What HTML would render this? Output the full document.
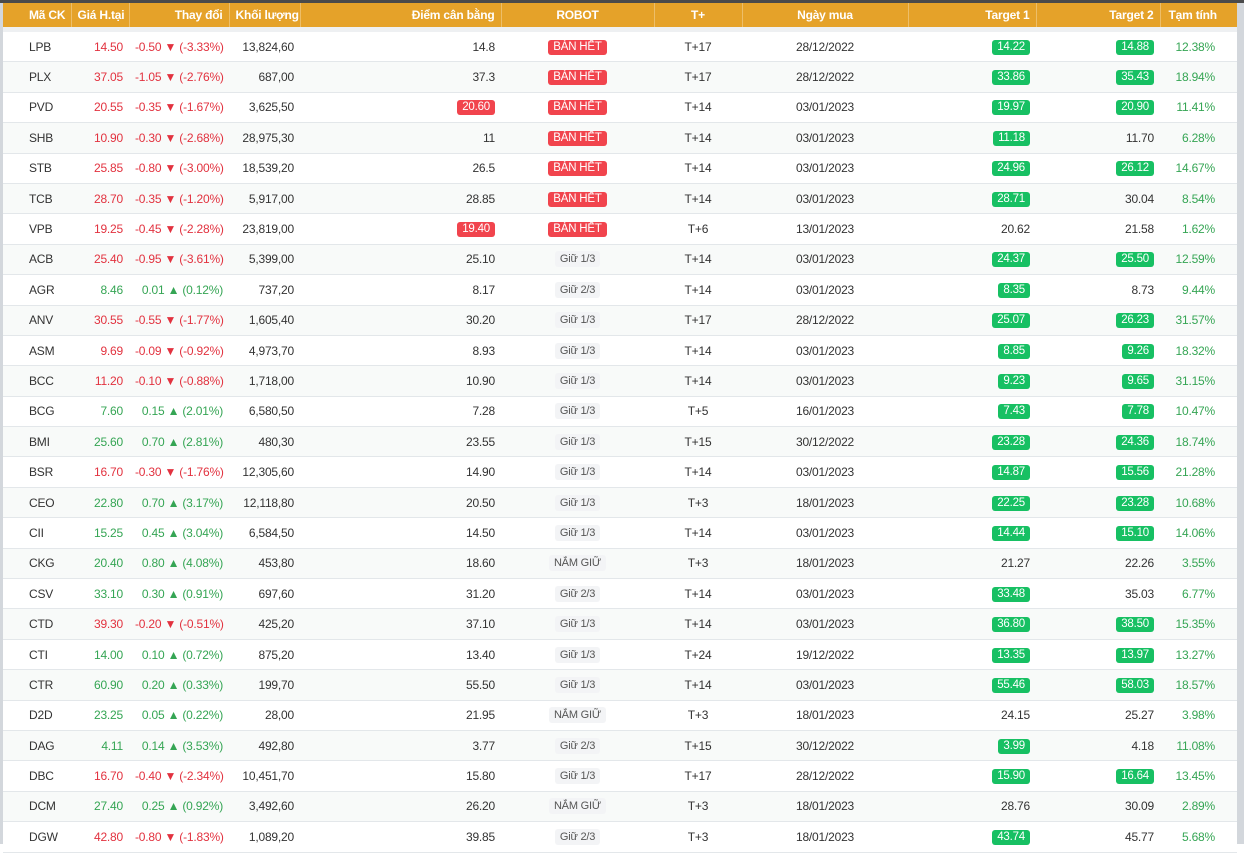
<!DOCTYPE html>
<html><head><meta charset="utf-8"><style>
html,body{margin:0;padding:0;width:1244px;height:844px;overflow:hidden;background:#fff;font-family:"Liberation Sans",sans-serif;}
.topbar{position:absolute;left:0;top:0;width:1244px;height:3px;background:#4a4a4a}
.lbar{position:absolute;left:0;top:3px;width:3px;height:841px;background:#d3d7dc}
.rbar{position:absolute;left:1237px;top:3px;width:7px;height:841px;background:#d3d7dc}
.hd{position:absolute;left:3px;top:3px;width:1234px;height:24px;background:#e5a229}
.hgap{position:absolute;left:3px;top:27px;width:1234px;height:5px;background:#eef0f2}
table{position:absolute;left:3px;border-collapse:collapse;table-layout:fixed;width:1234px}
#h{top:3px}
#h td{height:24px;color:#fff;font-weight:bold;font-size:12px;border-right:1px solid rgba(255,255,255,.3);padding:0 6px;white-space:nowrap;letter-spacing:-0.2px}
#b{top:32px}
#b td{height:29.4px;font-size:12px;color:#333;padding:0 6px;white-space:nowrap;border-bottom:1px solid #e3e7ea;letter-spacing:-0.2px}
#b tr:nth-child(even) td{background:#f8faf9}
#b td.c1{padding-left:26px;text-align:left}
.r{text-align:right}.c{text-align:center}
#b td.dn{color:#e2323f}#b td.up{color:#35a554}
.bd{display:inline-block;height:15px;line-height:15px;padding:0 5px;border-radius:3px;color:#fff;font-size:11.5px}
.rd{background:#f1444d}.gr{background:#17c063}
.gy{display:inline-block;height:16px;line-height:16px;padding:0 5px;border-radius:3px;background:#f3f4f6;color:#555;font-size:11px}
</style></head><body>
<div class="topbar"></div><div class="lbar"></div><div class="rbar"></div>
<div class="hd"></div><div class="hgap"></div>
<table id="h"><colgroup><col style="width:68px"><col style="width:58px"><col style="width:100px"><col style="width:71px"><col style="width:201px"><col style="width:153px"><col style="width:88px"><col style="width:166px"><col style="width:128px"><col style="width:124px"><col style="width:77px"></colgroup>
<tr><td style="padding-left:26px">Mã CK</td><td class="r">Giá H.tại</td><td class="r">Thay đổi</td><td class="r">Khối lượng</td><td class="r">Điểm cân bằng</td><td class="c">ROBOT</td><td class="c">T+</td><td class="c">Ngày mua</td><td class="r">Target 1</td><td class="r">Target 2</td><td style="padding-left:8px;border-right:none">Tạm tính</td></tr></table>
<table id="b"><colgroup><col style="width:68px"><col style="width:58px"><col style="width:100px"><col style="width:71px"><col style="width:201px"><col style="width:153px"><col style="width:88px"><col style="width:166px"><col style="width:128px"><col style="width:124px"><col style="width:77px"></colgroup>
<tr><td class="c1">LPB</td><td class="r dn">14.50</td><td class="r dn">-0.50 ▼ (-3.33%)</td><td class="r">13,824,60</td><td class="r">14.8</td><td class="c"><span class="bd rd">BÁN HẾT</span></td><td class="c">T+17</td><td class="c">28/12/2022</td><td class="r"><span class="bd gr">14.22</span></td><td class="r"><span class="bd gr">14.88</span></td><td class="r up" style="padding-right:22px">12.38%</td></tr>
<tr><td class="c1">PLX</td><td class="r dn">37.05</td><td class="r dn">-1.05 ▼ (-2.76%)</td><td class="r">687,00</td><td class="r">37.3</td><td class="c"><span class="bd rd">BÁN HẾT</span></td><td class="c">T+17</td><td class="c">28/12/2022</td><td class="r"><span class="bd gr">33.86</span></td><td class="r"><span class="bd gr">35.43</span></td><td class="r up" style="padding-right:22px">18.94%</td></tr>
<tr><td class="c1">PVD</td><td class="r dn">20.55</td><td class="r dn">-0.35 ▼ (-1.67%)</td><td class="r">3,625,50</td><td class="r"><span class="bd rd">20.60</span></td><td class="c"><span class="bd rd">BÁN HẾT</span></td><td class="c">T+14</td><td class="c">03/01/2023</td><td class="r"><span class="bd gr">19.97</span></td><td class="r"><span class="bd gr">20.90</span></td><td class="r up" style="padding-right:22px">11.41%</td></tr>
<tr><td class="c1">SHB</td><td class="r dn">10.90</td><td class="r dn">-0.30 ▼ (-2.68%)</td><td class="r">28,975,30</td><td class="r">11</td><td class="c"><span class="bd rd">BÁN HẾT</span></td><td class="c">T+14</td><td class="c">03/01/2023</td><td class="r"><span class="bd gr">11.18</span></td><td class="r">11.70</td><td class="r up" style="padding-right:22px">6.28%</td></tr>
<tr><td class="c1">STB</td><td class="r dn">25.85</td><td class="r dn">-0.80 ▼ (-3.00%)</td><td class="r">18,539,20</td><td class="r">26.5</td><td class="c"><span class="bd rd">BÁN HẾT</span></td><td class="c">T+14</td><td class="c">03/01/2023</td><td class="r"><span class="bd gr">24.96</span></td><td class="r"><span class="bd gr">26.12</span></td><td class="r up" style="padding-right:22px">14.67%</td></tr>
<tr><td class="c1">TCB</td><td class="r dn">28.70</td><td class="r dn">-0.35 ▼ (-1.20%)</td><td class="r">5,917,00</td><td class="r">28.85</td><td class="c"><span class="bd rd">BÁN HẾT</span></td><td class="c">T+14</td><td class="c">03/01/2023</td><td class="r"><span class="bd gr">28.71</span></td><td class="r">30.04</td><td class="r up" style="padding-right:22px">8.54%</td></tr>
<tr><td class="c1">VPB</td><td class="r dn">19.25</td><td class="r dn">-0.45 ▼ (-2.28%)</td><td class="r">23,819,00</td><td class="r"><span class="bd rd">19.40</span></td><td class="c"><span class="bd rd">BÁN HẾT</span></td><td class="c">T+6</td><td class="c">13/01/2023</td><td class="r">20.62</td><td class="r">21.58</td><td class="r up" style="padding-right:22px">1.62%</td></tr>
<tr><td class="c1">ACB</td><td class="r dn">25.40</td><td class="r dn">-0.95 ▼ (-3.61%)</td><td class="r">5,399,00</td><td class="r">25.10</td><td class="c"><span class="gy">Giữ 1/3</span></td><td class="c">T+14</td><td class="c">03/01/2023</td><td class="r"><span class="bd gr">24.37</span></td><td class="r"><span class="bd gr">25.50</span></td><td class="r up" style="padding-right:22px">12.59%</td></tr>
<tr><td class="c1">AGR</td><td class="r up">8.46</td><td class="r up">0.01 ▲ (0.12%)</td><td class="r">737,20</td><td class="r">8.17</td><td class="c"><span class="gy">Giữ 2/3</span></td><td class="c">T+14</td><td class="c">03/01/2023</td><td class="r"><span class="bd gr">8.35</span></td><td class="r">8.73</td><td class="r up" style="padding-right:22px">9.44%</td></tr>
<tr><td class="c1">ANV</td><td class="r dn">30.55</td><td class="r dn">-0.55 ▼ (-1.77%)</td><td class="r">1,605,40</td><td class="r">30.20</td><td class="c"><span class="gy">Giữ 1/3</span></td><td class="c">T+17</td><td class="c">28/12/2022</td><td class="r"><span class="bd gr">25.07</span></td><td class="r"><span class="bd gr">26.23</span></td><td class="r up" style="padding-right:22px">31.57%</td></tr>
<tr><td class="c1">ASM</td><td class="r dn">9.69</td><td class="r dn">-0.09 ▼ (-0.92%)</td><td class="r">4,973,70</td><td class="r">8.93</td><td class="c"><span class="gy">Giữ 1/3</span></td><td class="c">T+14</td><td class="c">03/01/2023</td><td class="r"><span class="bd gr">8.85</span></td><td class="r"><span class="bd gr">9.26</span></td><td class="r up" style="padding-right:22px">18.32%</td></tr>
<tr><td class="c1">BCC</td><td class="r dn">11.20</td><td class="r dn">-0.10 ▼ (-0.88%)</td><td class="r">1,718,00</td><td class="r">10.90</td><td class="c"><span class="gy">Giữ 1/3</span></td><td class="c">T+14</td><td class="c">03/01/2023</td><td class="r"><span class="bd gr">9.23</span></td><td class="r"><span class="bd gr">9.65</span></td><td class="r up" style="padding-right:22px">31.15%</td></tr>
<tr><td class="c1">BCG</td><td class="r up">7.60</td><td class="r up">0.15 ▲ (2.01%)</td><td class="r">6,580,50</td><td class="r">7.28</td><td class="c"><span class="gy">Giữ 1/3</span></td><td class="c">T+5</td><td class="c">16/01/2023</td><td class="r"><span class="bd gr">7.43</span></td><td class="r"><span class="bd gr">7.78</span></td><td class="r up" style="padding-right:22px">10.47%</td></tr>
<tr><td class="c1">BMI</td><td class="r up">25.60</td><td class="r up">0.70 ▲ (2.81%)</td><td class="r">480,30</td><td class="r">23.55</td><td class="c"><span class="gy">Giữ 1/3</span></td><td class="c">T+15</td><td class="c">30/12/2022</td><td class="r"><span class="bd gr">23.28</span></td><td class="r"><span class="bd gr">24.36</span></td><td class="r up" style="padding-right:22px">18.74%</td></tr>
<tr><td class="c1">BSR</td><td class="r dn">16.70</td><td class="r dn">-0.30 ▼ (-1.76%)</td><td class="r">12,305,60</td><td class="r">14.90</td><td class="c"><span class="gy">Giữ 1/3</span></td><td class="c">T+14</td><td class="c">03/01/2023</td><td class="r"><span class="bd gr">14.87</span></td><td class="r"><span class="bd gr">15.56</span></td><td class="r up" style="padding-right:22px">21.28%</td></tr>
<tr><td class="c1">CEO</td><td class="r up">22.80</td><td class="r up">0.70 ▲ (3.17%)</td><td class="r">12,118,80</td><td class="r">20.50</td><td class="c"><span class="gy">Giữ 1/3</span></td><td class="c">T+3</td><td class="c">18/01/2023</td><td class="r"><span class="bd gr">22.25</span></td><td class="r"><span class="bd gr">23.28</span></td><td class="r up" style="padding-right:22px">10.68%</td></tr>
<tr><td class="c1">CII</td><td class="r up">15.25</td><td class="r up">0.45 ▲ (3.04%)</td><td class="r">6,584,50</td><td class="r">14.50</td><td class="c"><span class="gy">Giữ 1/3</span></td><td class="c">T+14</td><td class="c">03/01/2023</td><td class="r"><span class="bd gr">14.44</span></td><td class="r"><span class="bd gr">15.10</span></td><td class="r up" style="padding-right:22px">14.06%</td></tr>
<tr><td class="c1">CKG</td><td class="r up">20.40</td><td class="r up">0.80 ▲ (4.08%)</td><td class="r">453,80</td><td class="r">18.60</td><td class="c"><span class="gy">NẮM GIỮ</span></td><td class="c">T+3</td><td class="c">18/01/2023</td><td class="r">21.27</td><td class="r">22.26</td><td class="r up" style="padding-right:22px">3.55%</td></tr>
<tr><td class="c1">CSV</td><td class="r up">33.10</td><td class="r up">0.30 ▲ (0.91%)</td><td class="r">697,60</td><td class="r">31.20</td><td class="c"><span class="gy">Giữ 2/3</span></td><td class="c">T+14</td><td class="c">03/01/2023</td><td class="r"><span class="bd gr">33.48</span></td><td class="r">35.03</td><td class="r up" style="padding-right:22px">6.77%</td></tr>
<tr><td class="c1">CTD</td><td class="r dn">39.30</td><td class="r dn">-0.20 ▼ (-0.51%)</td><td class="r">425,20</td><td class="r">37.10</td><td class="c"><span class="gy">Giữ 1/3</span></td><td class="c">T+14</td><td class="c">03/01/2023</td><td class="r"><span class="bd gr">36.80</span></td><td class="r"><span class="bd gr">38.50</span></td><td class="r up" style="padding-right:22px">15.35%</td></tr>
<tr><td class="c1">CTI</td><td class="r up">14.00</td><td class="r up">0.10 ▲ (0.72%)</td><td class="r">875,20</td><td class="r">13.40</td><td class="c"><span class="gy">Giữ 1/3</span></td><td class="c">T+24</td><td class="c">19/12/2022</td><td class="r"><span class="bd gr">13.35</span></td><td class="r"><span class="bd gr">13.97</span></td><td class="r up" style="padding-right:22px">13.27%</td></tr>
<tr><td class="c1">CTR</td><td class="r up">60.90</td><td class="r up">0.20 ▲ (0.33%)</td><td class="r">199,70</td><td class="r">55.50</td><td class="c"><span class="gy">Giữ 1/3</span></td><td class="c">T+14</td><td class="c">03/01/2023</td><td class="r"><span class="bd gr">55.46</span></td><td class="r"><span class="bd gr">58.03</span></td><td class="r up" style="padding-right:22px">18.57%</td></tr>
<tr><td class="c1">D2D</td><td class="r up">23.25</td><td class="r up">0.05 ▲ (0.22%)</td><td class="r">28,00</td><td class="r">21.95</td><td class="c"><span class="gy">NẮM GIỮ</span></td><td class="c">T+3</td><td class="c">18/01/2023</td><td class="r">24.15</td><td class="r">25.27</td><td class="r up" style="padding-right:22px">3.98%</td></tr>
<tr><td class="c1">DAG</td><td class="r up">4.11</td><td class="r up">0.14 ▲ (3.53%)</td><td class="r">492,80</td><td class="r">3.77</td><td class="c"><span class="gy">Giữ 2/3</span></td><td class="c">T+15</td><td class="c">30/12/2022</td><td class="r"><span class="bd gr">3.99</span></td><td class="r">4.18</td><td class="r up" style="padding-right:22px">11.08%</td></tr>
<tr><td class="c1">DBC</td><td class="r dn">16.70</td><td class="r dn">-0.40 ▼ (-2.34%)</td><td class="r">10,451,70</td><td class="r">15.80</td><td class="c"><span class="gy">Giữ 1/3</span></td><td class="c">T+17</td><td class="c">28/12/2022</td><td class="r"><span class="bd gr">15.90</span></td><td class="r"><span class="bd gr">16.64</span></td><td class="r up" style="padding-right:22px">13.45%</td></tr>
<tr><td class="c1">DCM</td><td class="r up">27.40</td><td class="r up">0.25 ▲ (0.92%)</td><td class="r">3,492,60</td><td class="r">26.20</td><td class="c"><span class="gy">NẮM GIỮ</span></td><td class="c">T+3</td><td class="c">18/01/2023</td><td class="r">28.76</td><td class="r">30.09</td><td class="r up" style="padding-right:22px">2.89%</td></tr>
<tr><td class="c1">DGW</td><td class="r dn">42.80</td><td class="r dn">-0.80 ▼ (-1.83%)</td><td class="r">1,089,20</td><td class="r">39.85</td><td class="c"><span class="gy">Giữ 2/3</span></td><td class="c">T+3</td><td class="c">18/01/2023</td><td class="r"><span class="bd gr">43.74</span></td><td class="r">45.77</td><td class="r up" style="padding-right:22px">5.68%</td></tr>
</table>
</body></html>
